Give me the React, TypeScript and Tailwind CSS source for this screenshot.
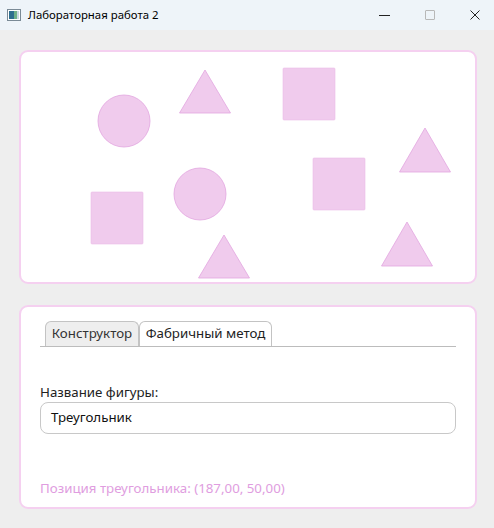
import React from 'react';

const FILL = '#f0cbed';
const STROKE = '#e2a6e0';

// shape coordinates are relative to the canvas padding box
function Shapes() {
  const tris: [number, number, number][] = [
    [184, 18, 61],
    [404, 76, 120],
    [203, 183, 226],
    [386, 170, 214],
  ];
  return (
    <svg className="absolute inset-0" width="454" height="230" viewBox="0 0 454 230">
      <circle cx="103" cy="69" r="26" fill={FILL} stroke={STROKE} strokeWidth="0.8" />
      <circle cx="179" cy="142" r="26" fill={FILL} stroke={STROKE} strokeWidth="0.8" />
      <rect x="262" y="16" width="52" height="52" rx="1" fill={FILL} stroke="#ebbde8" strokeWidth="0.6" />
      <rect x="292" y="106" width="52" height="52" rx="1" fill={FILL} stroke="#ebbde8" strokeWidth="0.6" />
      <rect x="70" y="140" width="52" height="52" rx="1" fill={FILL} stroke="#ebbde8" strokeWidth="0.6" />
      {tris.map(([cx, top, base], i) => (
        <polygon
          key={i}
          points={`${cx},${top} ${cx + 25.5},${base} ${cx - 25.5},${base}`}
          fill={FILL}
          stroke={STROKE}
          strokeWidth="0.8"
        />
      ))}
    </svg>
  );
}

export default function App() {
  return (
    <div
      className="w-[494px] h-[528px] bg-[#eeeeee] flex flex-col text-[#222]"
      style={{ fontFamily: '"Noto Sans", "Open Sans", sans-serif' }}
    >
      {/* title bar */}
      <div className="h-[30px] bg-[#eef4f9] flex items-center shrink-0">
        <svg className="ml-[7px]" width="14" height="12" viewBox="0 0 14 12">
          <rect x="0.5" y="0.5" width="13" height="11" fill="#fff" stroke="#7a8a96" />
          <rect x="2" y="2" width="5" height="8" fill="#2f6f8f" />
          <rect x="7" y="2" width="3" height="8" fill="#6fb08a" />
          <rect x="10" y="2" width="2" height="8" fill="#c9d8e2" />
        </svg>
        <span className="ml-[7px] text-[11.4px] text-black">Лабораторная работа 2</span>
        <div className="ml-auto mr-[14px] flex items-center gap-[35px]">
          <div className="w-[11px] h-px bg-[#222]" />
          <div className="w-[10px] h-[10px] border border-[#b8b8b8] rounded-[1px]" />
          <svg width="10" height="10" viewBox="0 0 10 10">
            <path d="M0.5 0.5 L9.5 9.5 M9.5 0.5 L0.5 9.5" stroke="#222" strokeWidth="1" />
          </svg>
        </div>
      </div>

      <div className="flex flex-col pl-[19px] pr-[17px] pt-[20px] gap-[21px]">
        {/* canvas */}
        <div className="relative h-[234px] bg-white border-2 border-[#f5d0f0] rounded-[9px] overflow-hidden">
          <Shapes />
        </div>

        {/* controls */}
        <div className="h-[204px] bg-white border-2 border-[#f5d0f0] rounded-[9px] pl-[19px] pr-[19px] pt-[14px] flex flex-col">
          <div className="flex items-end border-b border-[#bcbcbc] pl-[5px] h-[26px]">
            <div className="h-[25px] w-[94px] bg-[#eeeeee] border border-b-0 border-[#c3c3c3] rounded-t-[6px] flex items-center justify-center text-[13.3px] text-[#333]">
              Конструктор
            </div>
            <div className="h-[25px] w-[133px] bg-white border border-b-0 border-[#c3c3c3] rounded-t-[6px] flex items-center justify-center text-[13.3px] text-[#222]">
              Фабричный метод
            </div>
          </div>
          <div className="mt-[36px] text-[13.3px] leading-[18px] text-[#222]">Название фигуры:</div>
          <div className="mt-[1px] h-[32px] border border-[#c8c8c8] rounded-[8px] flex items-center px-[10px] text-[13.3px] text-[#111]">
            Треугольник
          </div>
          <div className="mt-[45px] text-[13.3px] text-[#e09de0]">Позиция треугольника: (187,00, 50,00)</div>
        </div>
      </div>
    </div>
  );
}
